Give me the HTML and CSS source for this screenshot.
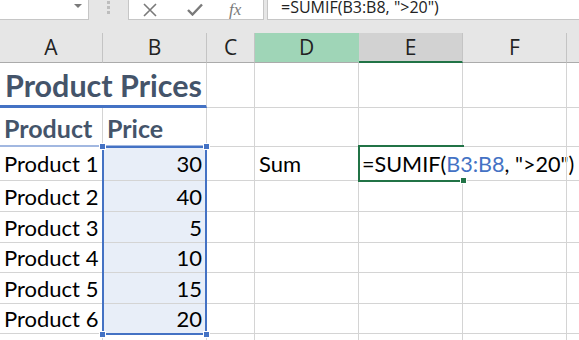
FILE: index.html
```html
<!DOCTYPE html>
<html lang="en">
<head>
    <meta charset="UTF-8">
    <title>SUMIF</title>
    <link rel="stylesheet" href="styles.css">
</head>
<body>
    <div class="formula-bar">
        <div class="name-box"><span class="drop"></span></div>
        <div class="grip"><i></i><i></i><i></i></div>
        <div class="fx-buttons">
            <svg width="14" height="14" viewBox="0 0 14 14"><path d="M1 1 L13 13 M13 1 L1 13" stroke="#7a7a7a" stroke-width="1.6" fill="none"/></svg>
            <svg width="16" height="13" viewBox="0 0 16 13"><path d="M1 7 L5.5 11.5 L15 1.5" stroke="#7a7a7a" stroke-width="2.4" fill="none"/></svg>
            <span class="fx">fx</span>
        </div>
        <div class="formula-input">=SUMIF(B3:B8, "&gt;20")</div>
    </div>
    <div class="gap"></div>

    <div class="sheet-wrap">
        <div class="sheet">
            <div class="col-head">A</div>
            <div class="col-head">B</div>
            <div class="col-head">C</div>
            <div class="col-head hl">D</div>
            <div class="col-head sel">E</div>
            <div class="col-head">F</div>
            <div class="col-head last"></div>

            <div class="cell title">Product Prices</div>
            <div class="cell title-b"></div>
            <div class="cell"></div><div class="cell"></div><div class="cell"></div><div class="cell"></div><div class="cell last"></div>

            <div class="cell head">Product</div>
            <div class="cell head">Price</div>
            <div class="cell"></div><div class="cell"></div><div class="cell"></div><div class="cell"></div><div class="cell last"></div>

            <div class="cell">Product 1</div>
            <div class="cell num">30</div>
            <div class="cell"></div>
            <div class="cell">Sum</div>
            <div class="cell formula">=SUMIF(<span class="ref">B3:B8</span>, "&gt;20")</div>
            <div class="cell"></div><div class="cell last"></div>

            <div class="cell">Product 2</div>
            <div class="cell num">40</div>
            <div class="cell"></div><div class="cell"></div><div class="cell"></div><div class="cell"></div><div class="cell last"></div>

            <div class="cell">Product 3</div>
            <div class="cell num">5</div>
            <div class="cell"></div><div class="cell"></div><div class="cell"></div><div class="cell"></div><div class="cell last"></div>

            <div class="cell">Product 4</div>
            <div class="cell num">10</div>
            <div class="cell"></div><div class="cell"></div><div class="cell"></div><div class="cell"></div><div class="cell last"></div>

            <div class="cell">Product 5</div>
            <div class="cell num">15</div>
            <div class="cell"></div><div class="cell"></div><div class="cell"></div><div class="cell"></div><div class="cell last"></div>

            <div class="cell">Product 6</div>
            <div class="cell num">20</div>
            <div class="cell"></div><div class="cell"></div><div class="cell"></div><div class="cell"></div><div class="cell last"></div>

            <div class="cell"></div><div class="cell"></div><div class="cell"></div><div class="cell"></div><div class="cell"></div><div class="cell"></div><div class="cell last"></div>
        </div>

        <!-- selection B3:B8 and active cell E3, drawn over the sheet -->
        <div class="sheet overlay">
            <div class="range">
                <span class="h tl"></span><span class="h tr"></span><span class="h bl"></span><span class="h br"></span>
            </div>
            <div class="active"><span class="fill"></span></div>
        </div>
    </div>
</body>
</html>
```

FILE: styles.css
```css
body {
    margin: 0;
    width: 579px;
    height: 340px;
    overflow: hidden;
    background: #e6e6e6;
    font-family: Lato, "Open Sans", sans-serif;
}
.formula-bar {
    display: flex;
    height: 20px;
}
.name-box {
    width: 88px;
    background: #fff;
    border-right: 1px solid #c6c6c6;
    border-bottom: 1px solid #c6c6c6;
    position: relative;
}
.drop {
    position: absolute;
    left: 74px;
    top: 4px;
    border-left: 4px solid transparent;
    border-right: 4px solid transparent;
    border-top: 4px solid #7a7a7a;
}
.grip {
    width: 39px;
    display: flex;
    flex-direction: column;
    align-items: center;
    gap: 2px;
    padding-top: 1px;
}
.grip i {
    width: 3px;
    height: 3px;
    background: #bdbdbd;
}
.fx-buttons {
    width: 136px;
    box-sizing: border-box;
    background: #fff;
    border: 1px solid #c6c6c6;
    border-top: 0;
    display: flex;
    align-items: center;
    padding-left: 14px;
    gap: 30px;
}
.fx {
    font-family: "Liberation Serif", serif;
    font-style: italic;
    font-size: 17px;
    color: #7a7a7a;
    margin-left: -4px;
}
.formula-input {
    flex: 1;
    margin-left: 3px;
    background: #fff;
    border-left: 1px solid #c6c6c6;
    border-bottom: 1px solid #c6c6c6;
    padding-left: 13px;
    font-family: "Open Sans", sans-serif;
    font-size: 16px;
    line-height: 14px;
    color: #222;
    white-space: nowrap;
}
.gap {
    height: 13px;
}
.sheet-wrap {
    position: relative;
}
.sheet {
    display: grid;
    grid-template-columns: 103px 104px 48px 104px 104px 104px 12px;
    grid-template-rows: 30px 45px 39px 34px 31px 31px 30px 31px 30px 10px;
    background: #fff;
}
.overlay {
    position: absolute;
    inset: 0;
    background: none;
    pointer-events: none;
}
.col-head {
    background: #e6e6e6;
    border-right: 1px solid #c4c4c4;
    border-bottom: 1px solid #ababab;
    font-family: "Open Sans", sans-serif;
    font-size: 21px;
    color: #222;
    display: flex;
    align-items: center;
    justify-content: center;
    line-height: 1;
}
.col-head.hl {
    background: #9fd5b7;
    border-right-color: #9fd5b7;
}
.col-head.sel {
    background: #d2d2d2;
    border-bottom: 2px solid #217346;
}
.col-head.last {
    border-right: 0;
}
.cell {
    border-right: 1px solid #d4d4d4;
    border-bottom: 1px solid #d4d4d4;
    font-size: 22px;
    color: #000;
    padding: 0 4px;
    display: flex;
    align-items: center;
    white-space: nowrap;
    min-width: 0;
}
.cell.last {
    border-right: 0;
}
.title {
    font-size: 30.5px;
    font-weight: bold;
    color: #44546a;
    border-right: 0;
    border-bottom: 3px solid #4472c4;
    align-items: flex-end;
    padding-left: 5px;
    padding-bottom: 2px;
    overflow: visible;
}
.title-b {
    border-bottom: 3px solid #4472c4;
}
.head {
    font-size: 25px;
    font-weight: bold;
    color: #44546a;
    border-bottom: 2px solid #a2b8e1;
    padding-top: 3px;
}
.num {
    justify-content: flex-end;
    background: #e8eef8;
}
.formula {
    border-right: 0;
    overflow: visible;
    padding-left: 3px;
    font-size: 21.6px;
}
.ref {
    color: #4472c4;
}
.range {
    grid-column: 2 / 3;
    grid-row: 4 / 10;
    border: 2px solid #4472c4;
    margin: -1px 0 -1px -1px;
    position: relative;
}
.h {
    position: absolute;
    width: 5px;
    height: 5px;
    background: #4472c4;
    border: 1px solid #fff;
}
.tl { left: -5px; top: -5px; }
.tr { right: -5px; top: -5px; }
.bl { left: -5px; bottom: -5px; }
.br { right: -5px; bottom: -5px; }
.active {
    grid-column: 5 / 6;
    grid-row: 4 / 5;
    border: 2px solid #217346;
    border-right: 0;
    margin: -2px -1px -1px -1px;
    position: relative;
}
.fill {
    position: absolute;
    right: -3px;
    bottom: -4px;
    width: 5px;
    height: 5px;
    background: #217346;
    border: 1px solid #fff;
}
```
